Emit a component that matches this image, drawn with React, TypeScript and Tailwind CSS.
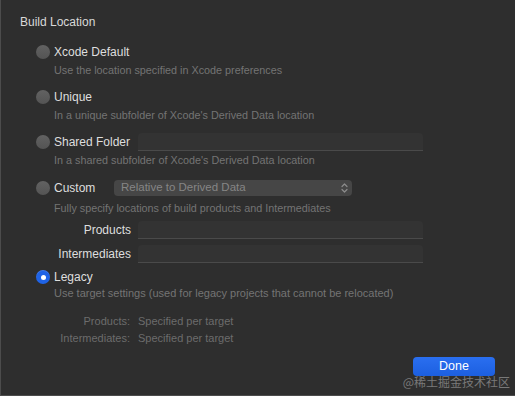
import React from "react";

type RadioProps = { checked?: boolean };

function Radio({ checked }: RadioProps) {
  if (checked) {
    return (
      <span className="flex h-[14px] w-[14px] shrink-0 items-center justify-center rounded-full bg-[#1f63e6] shadow-[inset_0_1px_0_rgba(255,255,255,0.15)]">
        <span className="h-[5px] w-[5px] rounded-full bg-white" />
      </span>
    );
  }
  return (
    <span className="h-[14px] w-[14px] shrink-0 rounded-full bg-gradient-to-b from-[#626262] to-[#545454]" />
  );
}

function Field() {
  return (
    <div className="h-[18px] w-[285px] rounded-t-[4px] border-b border-[#4a4a4a] bg-[#333333]" />
  );
}

function Option({ label, checked }: { label: string; checked?: boolean }) {
  return (
    <div className="flex h-[18px] items-center gap-[4px]">
      <Radio checked={checked} />
      <span className="text-[12px] text-[#dedede]">{label}</span>
    </div>
  );
}

function Desc({ children, className = "" }: { children: React.ReactNode; className?: string }) {
  return (
    <div className={`flex h-4 items-center pl-[18px] text-[10.8px] text-[#747474] ${className}`}>
      {children}
    </div>
  );
}

export default function App() {
  return (
    <div
      className="relative h-[396px] w-[515px] overflow-hidden border-b border-l border-[#4c4c4c] bg-[#2e2e2e] pl-[19px] pt-[14px]"
      style={{ fontFamily: '"Liberation Sans", Arial, sans-serif' }}
    >
      <div className="flex h-4 items-center text-[12px] text-[#d9d9d9]">Build Location</div>

      <div className="pl-[16px]">
        <div className="mt-[13px]">
          <Option label="Xcode Default" />
          <Desc className="mt-px">Use the location specified in Xcode preferences</Desc>
        </div>

        <div className="mt-[10px]">
          <Option label="Unique" />
          <Desc className="mt-px">In a unique subfolder of Xcode's Derived Data location</Desc>
        </div>

        <div className="mt-[10px]">
          <div className="flex h-[18px] items-center">
            <div className="flex w-[102px] items-center gap-[4px]">
              <Radio />
              <span className="text-[12px] text-[#dedede]">Shared Folder</span>
            </div>
            <Field />
          </div>
          <Desc className="mt-px">In a shared subfolder of Xcode's Derived Data location</Desc>
        </div>

        <div className="mt-[11px]">
          <div className="flex h-[18px] items-center">
            <div className="flex w-[78px] items-center gap-[4px]">
              <Radio />
              <span className="text-[12px] text-[#dedede]">Custom</span>
            </div>
            <div className="flex h-4 w-[238px] items-center justify-between rounded-[4px] bg-[#464646] pl-[7px] pr-[4px]">
              <span className="text-[11.5px] text-[#858585]">Relative to Derived Data</span>
              <svg width="7" height="10" viewBox="0 0 7 10" fill="none" stroke="#8c8c8c" strokeWidth="1.2" strokeLinecap="round" strokeLinejoin="round">
                <path d="M1 3.5 L3.5 1 L6 3.5" />
                <path d="M1 6.5 L3.5 9 L6 6.5" />
              </svg>
            </div>
          </div>
          <Desc className="mt-[3px]">Fully specify locations of build products and Intermediates</Desc>

          <div className="mt-[4px] flex h-5 items-center">
            <div className="w-[102px] pr-[7px] text-right text-[12px] text-[#dedede]">Products</div>
            <Field />
          </div>
          <div className="mt-[4px] flex h-5 items-center">
            <div className="w-[102px] pr-[7px] text-right text-[12px] text-[#dedede]">Intermediates</div>
            <Field />
          </div>
        </div>

        <div className="mt-[4px]">
          <Option label="Legacy" checked />
          <div className="flex h-[14px] items-center pl-[18px] text-[11px] text-[#747474]">
            Use target settings (used for legacy projects that cannot be relocated)
          </div>
        </div>

        <div className="mt-[13px] text-[11px] text-[#6c6c6c]">
          <div className="flex h-4 items-center">
            <div className="w-[102px] pr-[8px] text-right">Products:</div>
            <div>Specified per target</div>
          </div>
          <div className="mt-px flex h-4 items-center">
            <div className="w-[102px] pr-[8px] text-right">Intermediates:</div>
            <div>Specified per target</div>
          </div>
        </div>
      </div>

      <div className="mt-[11px] flex justify-end pr-[20px]">
        <button className="flex h-[19px] w-[82px] items-center justify-center rounded-[4px] bg-gradient-to-b from-[#2a6ff0] to-[#1c5fe0] text-[12.5px] text-white">
          Done
        </button>
      </div>

      <div
        className="absolute bottom-[4px] right-[5px] text-[12px] text-[#8c8c8c] opacity-80"
        style={{ fontFamily: '"Noto Sans CJK SC", sans-serif' }}
      >
        @稀土掘金技术社区
      </div>
    </div>
  );
}
